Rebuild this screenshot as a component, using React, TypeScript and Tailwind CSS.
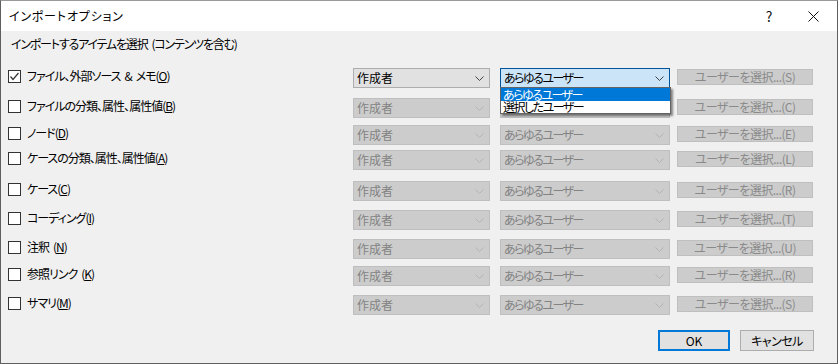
import { type ReactNode } from 'react';

type Row = { label: ReactNode; key: string; gap: string };

// mnemonic letter, underlined like a Win32 accelerator
const u = (c: string) => <span className="underline underline-offset-1">{c}</span>;
// a real space that survives the tight tracking
const sp = <span className="inline-block w-[4px]"> </span>;

const rows: Row[] = [
  { label: <>ファイル、外部ソース{sp}&amp;{sp}メモ({u('O')})</>, key: 'S', gap: 'mt-0' },
  { label: <>ファイルの分類、属性、属性値({u('B')})</>, key: 'C', gap: 'mt-[10px]' },
  { label: <>ノード({u('D')})</>, key: 'E', gap: 'mt-[7px]' },
  { label: <>ケースの分類、属性、属性値({u('A')})</>, key: 'L', gap: 'mt-[5px]' },
  { label: <>ケース({u('C')})</>, key: 'R', gap: 'mt-[11px]' },
  { label: <>コーディング({u('I')})</>, key: 'T', gap: 'mt-[9px]' },
  { label: <>注釈{sp}({u('N')})</>, key: 'U', gap: 'mt-[9px]' },
  { label: <>参照リンク{sp}({u('K')})</>, key: 'R', gap: 'mt-[7px]' },
  { label: <>サマリ({u('M')})</>, key: 'S', gap: 'mt-[9px]' },
];

function Chevron({ color }: { color: string }) {
  return (
    <svg width="9" height="5" viewBox="0 0 9 5" className="shrink-0">
      <path d="M0.5 0.5 L4.5 4.5 L8.5 0.5" fill="none" stroke={color} strokeWidth="1" />
    </svg>
  );
}

function Combo({
  text,
  width,
  state,
  tight,
}: {
  text: string;
  width: string;
  state: 'on' | 'focus' | 'off';
  tight?: boolean;
}) {
  const box =
    state === 'focus'
      ? 'bg-[#cce4f7] border-[#005499] text-black'
      : state === 'on'
        ? 'bg-[#e1e1e1] border-[#adadad] text-black'
        : 'bg-[#cccccc] border-[#bfbfbf] text-[#838383]';
  return (
    <div className={`${width} h-[20px] border flex items-center justify-between pl-[3px] pr-[5px] ${box}`}>
      <span className={`leading-[18px] ${tight ? 'tracking-[-1.5px]' : ''}`}>{text}</span>
      <Chevron color={state === 'off' ? '#b4b4b4' : '#444444'} />
    </div>
  );
}

export default function App() {
  return (
    <div className="w-[838px] h-[364px] flex flex-col border border-[#5f5f5f] border-t-[#9a9a9a] text-[12px] text-black [font-family:'Noto_Sans_CJK_JP','Noto_Sans',sans-serif] [font-feature-settings:'palt'] overflow-hidden">
      {/* Title bar */}
      <div className="h-[30px] bg-white flex items-center shrink-0">
        <span className="pl-[8px] flex-1 tracking-[0.8px]">インポートオプション</span>
        <span className="w-[44px] text-center text-[14px] text-[#111] mr-[-1px]">?</span>
        <span className="w-[46px] flex justify-center mr-[1px]">
          <svg width="11" height="11" viewBox="0 0 11 11">
            <path d="M0.5 0.5 L10.5 10.5 M10.5 0.5 L0.5 10.5" stroke="#111" strokeWidth="1" />
          </svg>
        </span>
      </div>

      {/* Body */}
      <div className="flex-1 bg-[#f0f0f0] pl-[7px] pt-[6px]">
        <div className="h-[14px] leading-[14px] pl-[3px] tracking-[-1.2px]">
          インポートするアイテムを選択{sp}(コンテンツを含む)
        </div>

        <div className="mt-[17px] flex flex-col">
          {rows.map((r, i) => (
            <div key={i} className={`flex items-start h-[20px] ${r.gap}`}>
              <div className="w-[345px] flex items-center gap-[6px] mt-[1px] h-[14px]">
                <div className="w-[13px] h-[13px] border border-[#333333] bg-white flex items-center justify-center shrink-0">
                  {i === 0 && (
                    <svg width="11" height="11" viewBox="0 0 11 11">
                      <path d="M1.5 5.5 L4 8.5 L9.5 2" fill="none" stroke="#333" strokeWidth="1.2" />
                    </svg>
                  )}
                </div>
                <span className="leading-[14px] whitespace-nowrap tracking-[-1px]">{r.label}</span>
              </div>

              <Combo text="作成者" width="w-[137px]" state={i === 0 ? 'on' : 'off'} />

              <div className="relative ml-[10px]">
                {/* row 2's user combo sits fully under the open list, so its text is not drawn */}
                <Combo
                  text={i === 1 ? '' : 'あらゆるユーザー'}
                  width="w-[170px]"
                  state={i === 0 ? 'focus' : 'off'}
                  tight
                />
                {i === 0 && (
                  <div className="absolute left-0 top-[19px] w-[171px] border border-[#646464] bg-white shadow-[2px_2px_2px_rgba(0,0,0,0.45)] z-10 tracking-[-1.5px]">
                    <div className="h-[13px] leading-[13px] bg-[#0078d7] text-white pl-[2px]">あらゆるユーザー</div>
                    <div className="h-[12px] leading-[12px] text-black pl-[2px]">選択したユーザー</div>
                  </div>
                )}
              </div>

              <div className="ml-[7px] mt-[1px] w-[136px] h-[16px] border border-[#bfbfbf] bg-[#cccccc] text-[#8a8a8a] flex items-center justify-center leading-[14px] tracking-[-0.5px]">
                ユーザーを選択...({r.key})
              </div>
            </div>
          ))}
        </div>

        {/* Footer buttons */}
        <div className="mt-[15px] flex justify-end gap-[10px] pr-[23px]">
          <button className="w-[72px] h-[21px] border-2 border-[#0078d7] bg-[#e1e1e1] leading-[17px]">OK</button>
          <button className="w-[74px] h-[21px] border border-[#adadad] bg-[#e1e1e1] leading-[19px] tracking-[-0.5px]">キャンセル</button>
        </div>
      </div>
    </div>
  );
}
